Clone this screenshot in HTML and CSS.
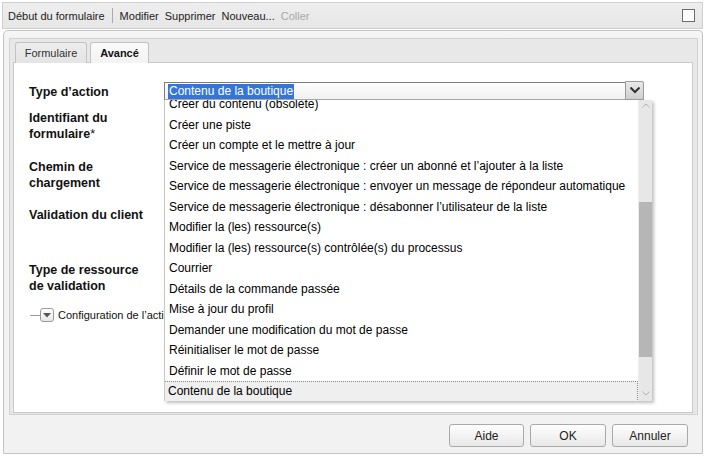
FILE: index.html
```html
<!DOCTYPE html>
<html lang="fr">
<head>
<meta charset="utf-8">
<title>Début du formulaire</title>
<link rel="stylesheet" href="styles.css">
</head>
<body>
<div class="toolbar">
  <span class="tb-item">Début du formulaire</span>
  <span class="tb-sep"></span>
  <span class="tb-item">Modifier</span>
  <span class="tb-item">Supprimer</span>
  <span class="tb-item">Nouveau...</span>
  <span class="tb-item disabled">Coller</span>
  <span class="tb-spacer"></span>
  <span class="tb-check"></span>
</div>
<div class="frame">
  <div class="panel">
    <div class="tabs">
      <div class="tab">Formulaire</div>
      <div class="tab active">Avancé</div>
    </div>
    <div class="content">
      <div class="row r1"><div class="label">Type d’action</div></div>
      <div class="row r2"><div class="label">Identifiant du<br>formulaire<span class="req">*</span></div></div>
      <div class="row r3"><div class="label">Chemin de<br>chargement</div></div>
      <div class="row r4"><div class="label">Validation du client</div></div>
      <div class="row r5"><div class="label">Type de ressource<br>de validation</div></div>
      <div class="config">
        <span class="tree-line"></span>
        <span class="toggle"><svg width="8" height="5" viewBox="0 0 8 5"><path d="M0 0h8L4 4.5z" fill="#555"/></svg></span>
        <span class="config-text">Configuration de l’action</span>
      </div>
    </div>
  </div>
  <div class="buttons">
    <button class="btn b-aide">Aide</button>
    <button class="btn b-ok">OK</button>
    <button class="btn b-annuler">Annuler</button>
  </div>
</div>

<div class="select">
  <span class="sel-text">Contenu de la boutique</span>
  <span class="sel-btn"><svg width="10" height="7" viewBox="0 0 10 7"><path d="M0.5 0.5L5 5 9.5 0.5" fill="none" stroke="#333" stroke-width="2"/></svg></span>
</div>
<div class="list">
  <div class="items">
    <div class="item">Créer du contenu (obsolète)</div>
    <div class="item">Créer une piste</div>
    <div class="item">Créer un compte et le mettre à jour</div>
    <div class="item">Service de messagerie électronique : créer un abonné et l’ajouter à la liste</div>
    <div class="item">Service de messagerie électronique : envoyer un message de répondeur automatique</div>
    <div class="item">Service de messagerie électronique : désabonner l’utilisateur de la liste</div>
    <div class="item">Modifier la (les) ressource(s)</div>
    <div class="item">Modifier la (les) ressource(s) contrôlée(s) du processus</div>
    <div class="item">Courrier</div>
    <div class="item">Détails de la commande passée</div>
    <div class="item">Mise à jour du profil</div>
    <div class="item">Demander une modification du mot de passe</div>
    <div class="item">Réinitialiser le mot de passe</div>
    <div class="item">Définir le mot de passe</div>
    <div class="item current">Contenu de la boutique</div>
  </div>
  <div class="scrollbar">
    <span class="arrow up"><svg width="8" height="5" viewBox="0 0 8 5"><path d="M0.5 4.5L4 1 7.5 4.5" fill="none" stroke="#b0b0b0" stroke-width="1"/></svg></span>
    <span class="thumb"></span>
    <span class="arrow down"><svg width="8" height="5" viewBox="0 0 8 5"><path d="M0.5 0.5L4 4 7.5 0.5" fill="none" stroke="#b0b0b0" stroke-width="1"/></svg></span>
  </div>
</div>
</body>
</html>
```
FILE: styles.css
```css
* { box-sizing: border-box; }
html, body { margin: 0; padding: 0; }
body {
  width: 706px;
  height: 457px;
  background: #fff;
  font-family: "Liberation Sans", Arial, sans-serif;
  color: #000;
  position: relative;
  overflow: hidden;
}

.toolbar {
  margin: 2px 3px 0 2px;
  height: 27px;
  border: 1px solid #cfcfcf;
  background: linear-gradient(#eeeeee, #e6e6e6);
  display: flex;
  align-items: center;
  padding-left: 5px;
  font-size: 11px;
  color: #222;
}
.tb-item { margin-right: 6px; }
.tb-item.disabled { color: #a8a8a8; }
.tb-sep {
  width: 1px;
  height: 15px;
  background: #aaaaaa;
  margin: 0 7px 0 1px;
}
.tb-spacer { flex: 1; }
.tb-check {
  width: 13px;
  height: 13px;
  border: 1px solid #6d6d6d;
  background: #fff;
  margin-right: 7px;
}

.frame {
  margin: 1px 3px 0 3px;
  height: 424px;
  border: 1px solid #c4c4c4;
  border-radius: 5px 4px 0 0;
  background: linear-gradient(#f6f6f6, #f2f2f2 10px);
  padding: 7px 4px 0 5px;
  display: flex;
  flex-direction: column;
}

.panel {
  border: 1px solid #d2d2d2;
  background: #e8e8e8;
  padding: 3px 4px 1px 3px;
  display: flex;
  flex-direction: column;
}

.tabs {
  display: flex;
  gap: 3px;
  padding-left: 2px;
  height: 20px;
  position: relative;
  z-index: 1;
}
.tab {
  height: 21px;
  border: 1px solid #c2c2c2;
  border-bottom: none;
  border-radius: 3px 3px 0 0;
  background: linear-gradient(#ededed, #e4e4e4);
  font-size: 11px;
  color: #333;
  padding: 4px 0 0;
  text-align: center;
  width: 72px;
}
.tab.active {
  width: 59px;
  background: linear-gradient(#fafafa, #f3f3f3);
  font-weight: bold;
  color: #111;
  height: 21px;
}

.content {
  height: 351px;
  background: #fff;
  border: 1px solid #cacaca;
  padding-top: 21px;
}

.row { padding-left: 15px; }
.label {
  font-weight: bold;
  font-size: 12.5px;
  line-height: 16px;
  color: #111;
}
.req { font-weight: normal; }
.r1 { height: 26px; }
.r2 { height: 49px; }
.r3 { height: 48px; }
.r4 { height: 55px; }
.r5 { height: 45px; }

.config {
  display: flex;
  align-items: center;
  padding-left: 16px;
  height: 16px;
  font-size: 11px;
  color: #111;
}
.tree-line {
  width: 10px;
  height: 1px;
  background: #9a9a9a;
}
.toggle {
  width: 14px;
  height: 14px;
  border: 1px solid #9a9a9a;
  border-radius: 3px;
  background: linear-gradient(#ffffff, #e8e8e8);
  display: flex;
  align-items: center;
  justify-content: center;
  margin-right: 4px;
}

.buttons {
  display: flex;
  justify-content: flex-end;
  gap: 6px;
  padding: 9px 10px 0 0;
}
.btn {
  height: 23px;
  border: 1px solid #a9a9a9;
  border-radius: 3px;
  background: linear-gradient(#fefefe, #e8e8e8);
  font-family: "Liberation Sans", Arial, sans-serif;
  font-size: 12px;
  color: #222;
  padding: 0;
}
.b-aide { width: 75px; }
.b-ok { width: 76px; }
.b-annuler { width: 76px; }

/* open dropdown overlay */
.select {
  position: absolute;
  left: 164px;
  top: 82px;
  width: 480px;
  height: 18px;
  border: 1px solid #7d7d7d;
  border-right-color: #b0b0b0;
  border-bottom-color: #a8a8a8;
  background: linear-gradient(#fdfdfd, #f1f1f1);
  display: flex;
  align-items: center;
  padding-left: 4px;
}
.sel-text {
  font-size: 12px;
  line-height: 15px;
  background: #3675d8;
  color: #fff;
  padding: 0 1px;
  margin-left: -1px;
}
.sel-btn {
  position: absolute;
  right: -1px;
  top: -2px;
  width: 19px;
  height: 19px;
  border: 1px solid #9c9c9c;
  border-radius: 0 2px 0 0;
  background: linear-gradient(#e9e9e9, #cfcfcf);
  display: flex;
  align-items: center;
  justify-content: center;
}

.list {
  position: absolute;
  left: 164px;
  top: 100px;
  width: 488px;
  height: 301px;
  background: #fff;
  border-left: 1px solid #c8c8c8;
  box-shadow: 2px 2px 3px rgba(0,0,0,0.25);
  overflow: hidden;
  display: flex;
}
.items {
  flex: 1;
  margin-top: -6px;
}
.item {
  height: 20.5px;
  line-height: 20.5px;
  padding-left: 4px;
  font-size: 12px;
  white-space: nowrap;
  color: #000;
}
.item.current {
  background: #efefef;
  border: 1px dotted #8a8a8a;
  line-height: 18.5px;
  padding-left: 3px;
  margin-left: -1px;
}
.scrollbar {
  width: 14px;
  background: #e7e7e7;
  border-left: 1px solid #ededed;
  position: relative;
}
.arrow {
  position: absolute;
  left: 3px;
  display: block;
  line-height: 0;
}
.arrow.up { top: 3px; }
.arrow.down { bottom: 5px; }
.thumb {
  position: absolute;
  left: 0;
  width: 13px;
  top: 102px;
  height: 155px;
  background: #b6b6b6;
}
```
